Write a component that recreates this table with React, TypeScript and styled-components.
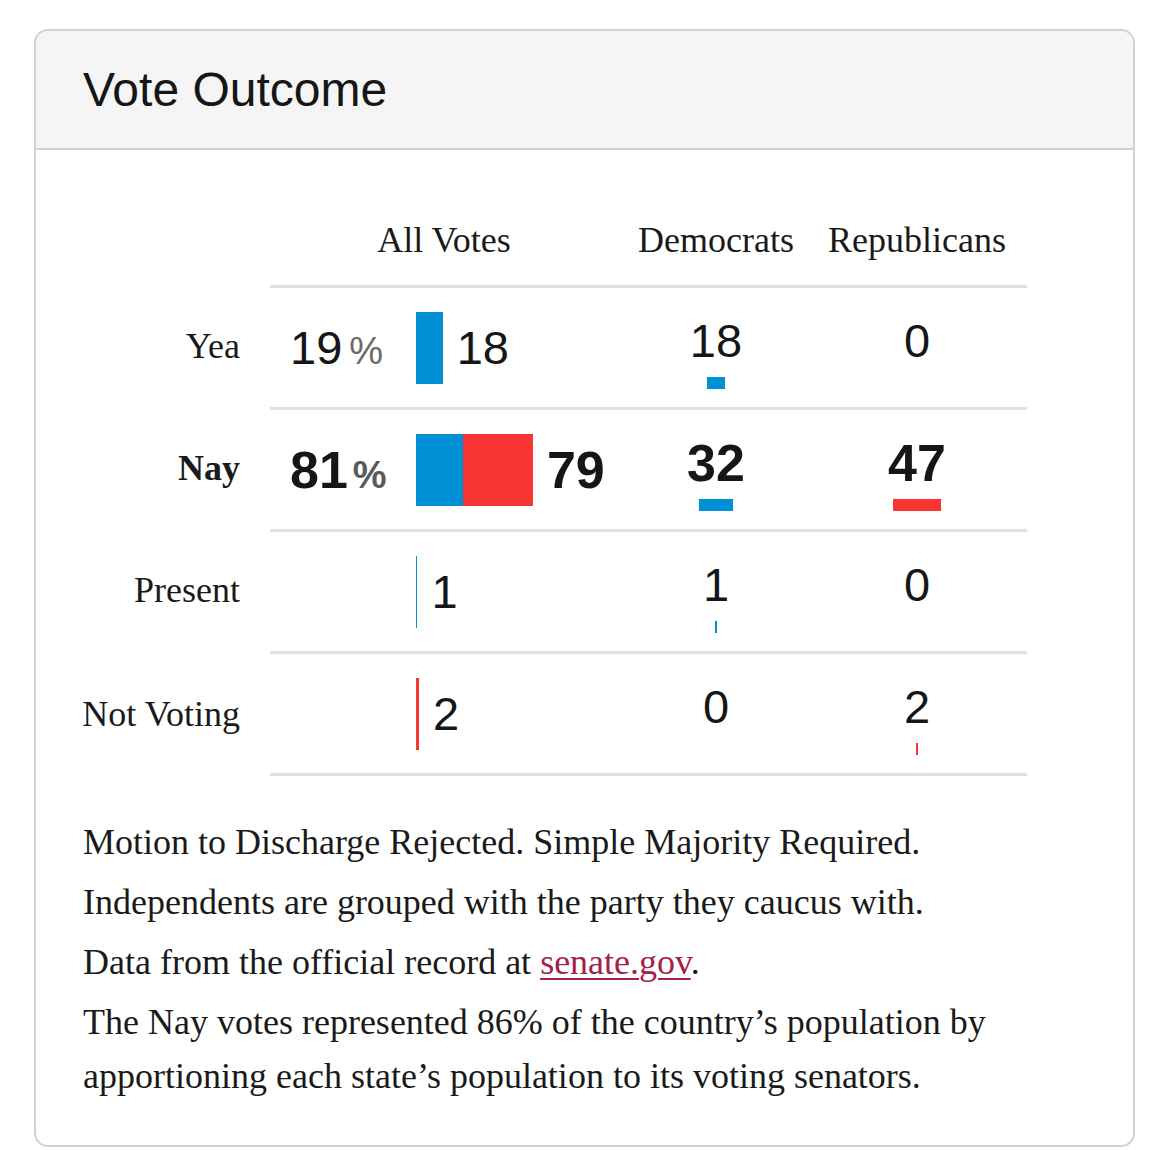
import React from 'react';
import styled, { createGlobalStyle } from 'styled-components';

const BLUE = '#0090d5';
const RED = '#f83532';
const LINE = '#e1e1e1';
const ALL_SCALE = 1.48;
const PARTY_SCALE = 1.04;

const GlobalStyle = createGlobalStyle`
  html, body { margin: 0; padding: 0; background: #ffffff; }
  body { font-family: "Liberation Serif", "Times New Roman", serif; color: #1a1a1a; }
`;

const Page = styled.div`
  padding: 29px 35px 4px 34px;
`;

const Card = styled.section`
  border: 2px solid #d2d2d2;
  border-radius: 14px;
  overflow: hidden;
  background: #ffffff;
`;

const Header = styled.header`
  background: #f5f5f5;
  border-bottom: 2px solid #d2d2d2;
  height: 117px;
  display: flex;
  align-items: center;
  padding: 0 47px;
`;

const Title = styled.h2`
  margin: 0;
  font-family: "Liberation Sans", Arial, sans-serif;
  font-weight: 400;
  font-size: 48px;
  color: #161616;
`;

const Body = styled.div`
  padding: 63px 47px 36px;
`;

const Row = styled.div`
  display: flex;
`;

const Label = styled.div<{ $bold?: boolean }>`
  width: 157px;
  flex-shrink: 0;
  margin-right: 30px;
  display: flex;
  align-items: center;
  justify-content: flex-end;
  white-space: nowrap;
  font-size: 36px;
  line-height: 54px;
  font-weight: ${(p) => (p.$bold ? 700 : 400)};
  color: #1a1a1a;
`;

const Cells = styled.div<{ $head?: boolean; $last?: boolean }>`
  width: 757px;
  flex-shrink: 0;
  display: grid;
  grid-template-columns: 348px 196px 206px;
  ${(p) =>
    p.$head
      ? 'padding-bottom: 18px;'
      : `border-top: 3px solid ${LINE}; height: 119px;`}
  ${(p) => (p.$last ? `border-bottom: 3px solid ${LINE};` : '')}
`;

const ColHead = styled.div`
  text-align: center;
  font-size: 36px;
  line-height: 54px;
  color: #1a1a1a;
`;

const AllCell = styled.div`
  display: flex;
  align-items: center;
  padding-left: 20px;
  font-family: "Liberation Sans", Arial, sans-serif;
`;

const Pct = styled.div<{ $bold?: boolean }>`
  width: 126px;
  display: flex;
  align-items: baseline;
  font-size: ${(p) => (p.$bold ? 52 : 47)}px;
  font-weight: ${(p) => (p.$bold ? 700 : 400)};
  color: #161616;
`;

const PctSign = styled.span<{ $bold?: boolean }>`
  font-size: 38px;
  margin-left: ${(p) => (p.$bold ? 5 : 7)}px;
  font-weight: ${(p) => (p.$bold ? 700 : 400)};
  color: ${(p) => (p.$bold ? '#5a5a5a' : '#6a6a6a')};
`;

const Bar = styled.div`
  display: flex;
  height: 72px;
`;

const Segment = styled.div<{ $color: string }>`
  height: 100%;
  background: ${(p) => p.$color};
`;

const Count = styled.span<{ $bold?: boolean }>`
  margin-left: 14px;
  font-size: ${(p) => (p.$bold ? 52 : 47)}px;
  font-weight: ${(p) => (p.$bold ? 700 : 400)};
  color: #161616;
`;

const PartyCell = styled.div`
  display: flex;
  flex-direction: column;
  align-items: center;
  justify-content: center;
  padding-top: 12px;
  font-family: "Liberation Sans", Arial, sans-serif;
`;

const PartyNum = styled.div<{ $bold?: boolean }>`
  line-height: 46px;
  font-size: ${(p) => (p.$bold ? 52 : 47)}px;
  font-weight: ${(p) => (p.$bold ? 700 : 400)};
  color: #161616;
`;

const MiniBar = styled.div<{ $color: string }>`
  height: 12px;
  margin-top: 13px;
  background: ${(p) => p.$color};
`;

const Notes = styled.div`
  margin-top: 39px;
  font-size: 36px;
  line-height: 54px;
  color: #1a1a1a;
`;

const Note = styled.p`
  margin: 0 0 6px;
`;

const Link = styled.a`
  color: #a3214b;
  text-decoration: underline;
  text-decoration-thickness: 2px;
  text-underline-offset: 4px;
`;

type VoteRow = {
  label: string;
  pct?: number;
  dem: number;
  rep: number;
  bold?: boolean;
};

const rows: VoteRow[] = [
  { label: 'Yea', pct: 19, dem: 18, rep: 0 },
  { label: 'Nay', pct: 81, dem: 32, rep: 47, bold: true },
  { label: 'Present', dem: 1, rep: 0 },
  { label: 'Not Voting', dem: 0, rep: 2 },
];

export default function App() {
  return (
    <>
      <GlobalStyle />
      <Page>
        <Card>
          <Header>
            <Title>Vote Outcome</Title>
          </Header>
          <Body>
            <Row>
              <Label />
              <Cells $head>
                <ColHead>All Votes</ColHead>
                <ColHead>Democrats</ColHead>
                <ColHead>Republicans</ColHead>
              </Cells>
            </Row>
            {rows.map((r, i) => {
              const total = r.dem + r.rep;
              return (
                <Row key={r.label}>
                  <Label $bold={r.bold}>{r.label}</Label>
                  <Cells $last={i === rows.length - 1}>
                    <AllCell>
                      <Pct $bold={r.bold}>
                        {r.pct !== undefined && (
                          <>
                            {r.pct}
                            <PctSign $bold={r.bold}>%</PctSign>
                          </>
                        )}
                      </Pct>
                      <Bar>
                        <Segment $color={BLUE} style={{ width: r.dem * ALL_SCALE }} />
                        <Segment $color={RED} style={{ width: r.rep * ALL_SCALE }} />
                      </Bar>
                      <Count $bold={r.bold}>{total}</Count>
                    </AllCell>
                    <PartyCell>
                      <PartyNum $bold={r.bold}>{r.dem}</PartyNum>
                      <MiniBar $color={BLUE} style={{ width: r.dem * PARTY_SCALE }} />
                    </PartyCell>
                    <PartyCell>
                      <PartyNum $bold={r.bold}>{r.rep}</PartyNum>
                      <MiniBar $color={RED} style={{ width: r.rep * PARTY_SCALE }} />
                    </PartyCell>
                  </Cells>
                </Row>
              );
            })}
            <Notes>
              <Note>Motion to Discharge Rejected. Simple Majority Required.</Note>
              <Note>Independents are grouped with the party they caucus with.</Note>
              <Note>
                Data from the official record at <Link href="#">senate.gov</Link>.
              </Note>
              <Note>
                The Nay votes represented 86% of the country’s population by apportioning each
                state’s population to its voting senators.
              </Note>
            </Notes>
          </Body>
        </Card>
      </Page>
    </>
  );
}
